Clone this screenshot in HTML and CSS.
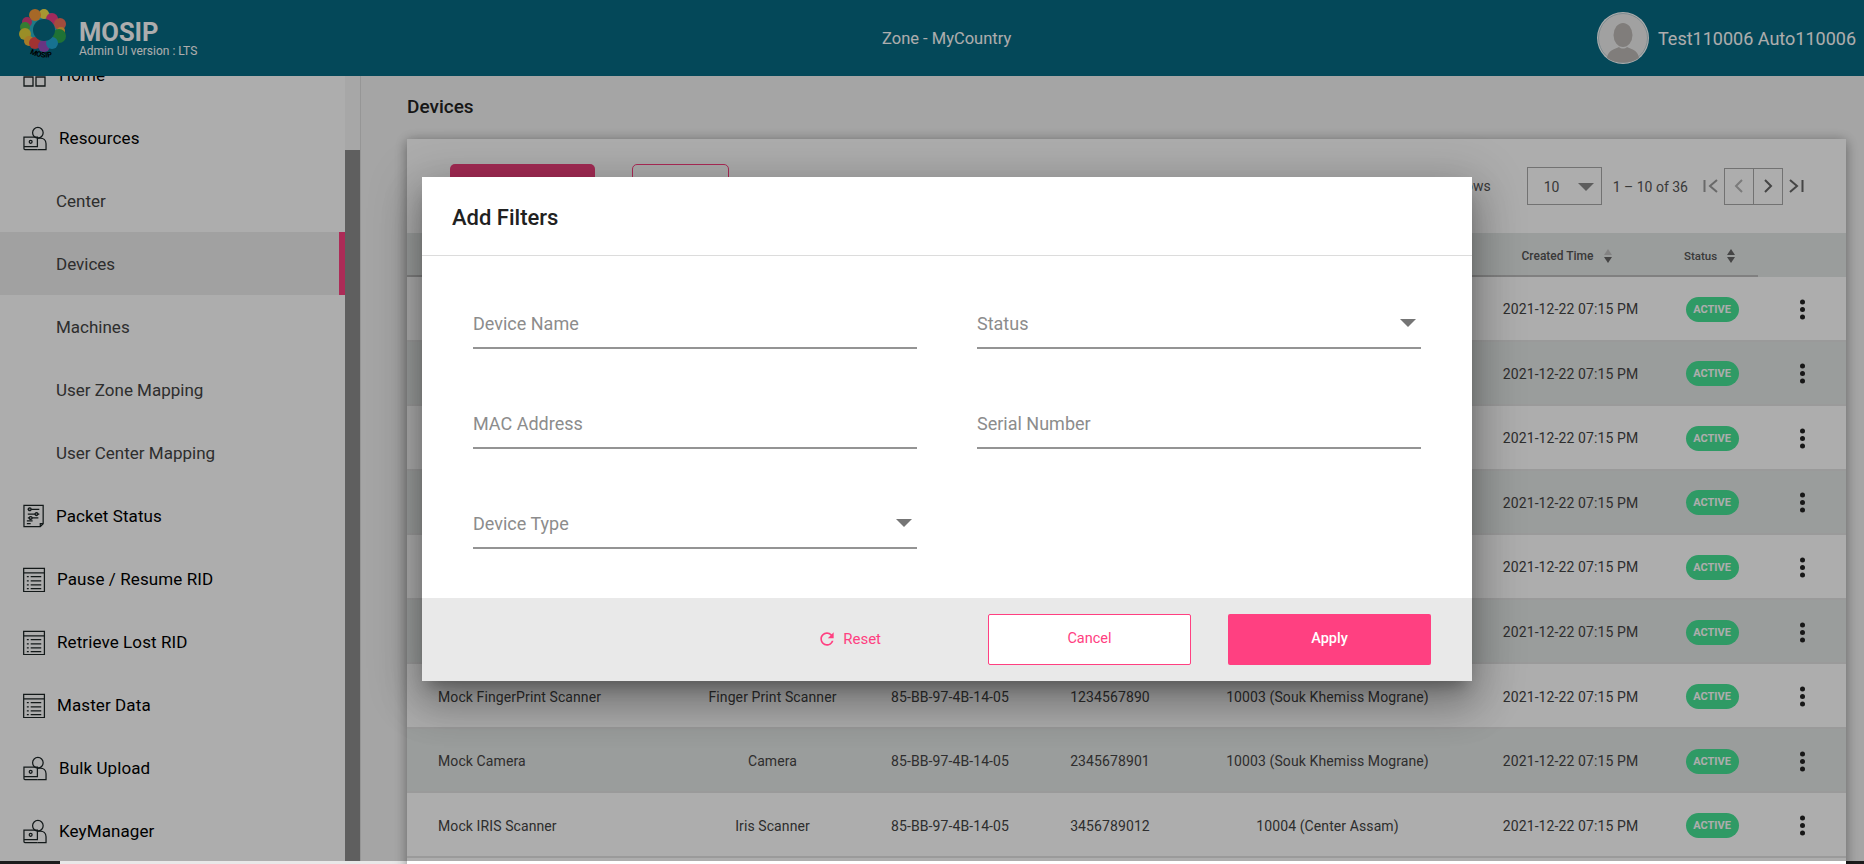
FILE: index.html
```html
<!DOCTYPE html>
<html lang="en">
<head>
    <meta charset="UTF-8">
    <title>MOSIP Admin - Devices</title>
    <link rel="stylesheet" href="styles.css">
</head>
<body>
    <div class="screen">
        <header class="topbar">
            <div class="brand">
                <svg class="logo" viewBox="0 0 52 60" width="52" height="60">
                    <circle cx="26" cy="21" r="18" fill="#2fb4c8"/>
                    <circle cx="26" cy="5" r="5" fill="#f7e04a"/>
                    <circle cx="17" cy="6" r="6" fill="#f59a3a"/>
                    <circle cx="34" cy="10" r="6" fill="#ee3f88"/>
                    <circle cx="42" cy="15" r="6" fill="#f0705a"/>
                    <circle cx="9" cy="13" r="5" fill="#d8407f"/>
                    <circle cx="7" cy="18" r="5" fill="#4fb84a"/>
                    <circle cx="43" cy="22" r="4" fill="#f5b53a"/>
                    <circle cx="41" cy="27" r="7" fill="#2fa84f"/>
                    <circle cx="7" cy="25" r="6" fill="#e3d23a"/>
                    <circle cx="11" cy="32" r="5" fill="#f5b53a"/>
                    <circle cx="17" cy="34" r="6" fill="#ed4a4a"/>
                    <circle cx="26" cy="37" r="6" fill="#9a4fc0"/>
                    <circle cx="34" cy="34" r="6" fill="#22a9d6"/>
                    <circle cx="26" cy="21" r="11" fill="#076a84"/>
                    <path id="logoArc" d="M9 43 Q27 54 46 43" fill="none"/>
                    <text class="logo-text"><textPath href="#logoArc" startOffset="3">MOSIP</textPath></text>
                </svg>
                <div class="brand-text">
                    <div class="brand-name">MOSIP</div>
                    <div class="brand-version">Admin UI version : LTS</div>
                </div>
            </div>
            <div class="zone">Zone - MyCountry</div>
            <div class="user">
                <svg class="avatar" viewBox="0 0 52 52" width="52" height="52">
                    <circle cx="26" cy="26" r="26" fill="#ffffff"/>
                    <circle cx="26" cy="26" r="24.500" fill="#eeeeee" stroke="#7fa6b2" stroke-width="0.500"/>
                    <ellipse cx="26" cy="23" rx="9.500" ry="12" fill="#bdb9b6"/>
                    <path d="M10 46 C11 38 18 37 22 35 C24 37 28 37 30 35 C34 37 41 38 42 46 C34 52 18 52 10 46 Z" fill="#bdb9b6"/>
                </svg>
                <span>Test110006 Auto110006</span>
            </div>
        </header>

        <div class="body">
            <nav class="sidebar">
                <div class="menu">
                    <div class="menu-item top wide">
                        <svg class="icon" viewBox="0 0 24 25"><path d="M1 4h9v7H1zM13 4h9v7h-9zM1 14h9v9H1zM13 14h9v9h-9z"/></svg>
                        <span>Home</span>
                    </div>
                    <div class="menu-item top wide">
                        <svg class="icon" viewBox="0 0 25 25"><use href="#person"/></svg>
                        <span>Resources</span>
                    </div>
                    <div class="menu-item sub">Center</div>
                    <div class="menu-item sub active">Devices</div>
                    <div class="menu-item sub">Machines</div>
                    <div class="menu-item sub">User Zone Mapping</div>
                    <div class="menu-item sub">User Center Mapping</div>
                    <div class="menu-item top">
                        <svg class="icon" viewBox="0 0 25 25">
                            <path d="M1 1h20v19l-3 3H1zM21 20h-3v3"/>
                            <path d="M5 5h12M5 10h12M5 14h11M4 17h6M4 20h4"/>
                            <circle cx="7" cy="5" r="1.500" fill="#adadad"/>
                            <circle cx="14" cy="10" r="1.500" fill="#adadad"/>
                            <circle cx="8" cy="14" r="1.500" fill="#adadad"/>
                        </svg>
                        <span class="tight">Packet Status</span>
                    </div>
                    <div class="menu-item top">
                        <svg class="icon" viewBox="0 0 25 25"><use href="#list"/></svg>
                        <span>Pause / Resume RID</span>
                    </div>
                    <div class="menu-item top">
                        <svg class="icon" viewBox="0 0 25 25"><use href="#list"/></svg>
                        <span>Retrieve Lost RID</span>
                    </div>
                    <div class="menu-item top">
                        <svg class="icon" viewBox="0 0 25 25"><use href="#list"/></svg>
                        <span>Master Data</span>
                    </div>
                    <div class="menu-item top wide">
                        <svg class="icon" viewBox="0 0 25 25"><use href="#person"/></svg>
                        <span>Bulk Upload</span>
                    </div>
                    <div class="menu-item top wide">
                        <svg class="icon" viewBox="0 0 25 25"><use href="#person"/></svg>
                        <span>KeyManager</span>
                    </div>
                </div>
                <div class="side-scroll"><div class="side-thumb"></div></div>
            </nav>

            <main class="content">
                <h1 class="page-title">Devices</h1>
                <section class="card">
                    <div class="toolbar">
                        <button class="btn-fill"></button>
                        <button class="btn-line"></button>
                        <div class="pager">
                            <span class="rows-label">Rows</span>
                            <div class="page-size"><span>10</span><i class="caret"></i></div>
                            <span class="page-range">1 – 10 of 36</span>
                            <svg class="page-icon" viewBox="0 0 16 14"><path d="M1.500 1v12M14 1 7 7l7 6" stroke="#9b9b9b"/></svg>
                            <div class="page-btns">
                                <div class="page-btn"><svg viewBox="0 0 10 14" width="10" height="14"><path d="M8 1 2 7l6 6" stroke="#b5b5b5"/></svg></div>
                                <div class="page-btn"><svg viewBox="0 0 10 14" width="10" height="14"><path d="M2 1l6 6-6 6" stroke="#666"/></svg></div>
                            </div>
                            <svg class="page-icon" viewBox="0 0 16 14"><path d="M2 1l7 6-7 6M14.500 1v12" stroke="#666"/></svg>
                        </div>
                    </div>

                    <div class="table">
                        <div class="row head">
                            <div></div><div></div><div></div><div></div><div></div>
                            <div class="col-head created">Created Time <i class="sort down"></i></div>
                            <div class="col-head status">Status <i class="sort"></i></div>
                            <div class="no-line"></div>
                        </div>
                        <div class="row"><div></div><div></div><div></div><div></div><div></div><div>2021-12-22 07:15 PM</div><div><span class="pill">ACTIVE</span></div><div><span class="dots"></span></div></div>
                        <div class="row"><div></div><div></div><div></div><div></div><div></div><div>2021-12-22 07:15 PM</div><div><span class="pill">ACTIVE</span></div><div><span class="dots"></span></div></div>
                        <div class="row"><div></div><div></div><div></div><div></div><div></div><div>2021-12-22 07:15 PM</div><div><span class="pill">ACTIVE</span></div><div><span class="dots"></span></div></div>
                        <div class="row"><div></div><div></div><div></div><div></div><div></div><div>2021-12-22 07:15 PM</div><div><span class="pill">ACTIVE</span></div><div><span class="dots"></span></div></div>
                        <div class="row"><div></div><div></div><div></div><div></div><div></div><div>2021-12-22 07:15 PM</div><div><span class="pill">ACTIVE</span></div><div><span class="dots"></span></div></div>
                        <div class="row"><div></div><div></div><div></div><div></div><div></div><div>2021-12-22 07:15 PM</div><div><span class="pill">ACTIVE</span></div><div><span class="dots"></span></div></div>
                        <div class="row">
                            <div class="name">Mock FingerPrint Scanner</div><div>Finger Print Scanner</div><div>85-BB-97-4B-14-05</div><div>1234567890</div><div>10003 (Souk Khemiss Mograne)</div><div>2021-12-22 07:15 PM</div><div><span class="pill">ACTIVE</span></div><div><span class="dots"></span></div>
                        </div>
                        <div class="row">
                            <div class="name">Mock Camera</div><div>Camera</div><div>85-BB-97-4B-14-05</div><div>2345678901</div><div>10003 (Souk Khemiss Mograne)</div><div>2021-12-22 07:15 PM</div><div><span class="pill">ACTIVE</span></div><div><span class="dots"></span></div>
                        </div>
                        <div class="row">
                            <div class="name">Mock IRIS Scanner</div><div>Iris Scanner</div><div>85-BB-97-4B-14-05</div><div>3456789012</div><div>10004 (Center Assam)</div><div>2021-12-22 07:15 PM</div><div><span class="pill">ACTIVE</span></div><div><span class="dots"></span></div>
                        </div>
                    </div>
                </section>
            </main>
        </div>

        <div class="overlay">
            <div class="dialog">
                <div class="dialog-title">Add Filters</div>
                <div class="dialog-body">
                    <div class="field">Device Name</div>
                    <div class="field">Status <i class="field-caret"></i></div>
                    <div class="field">MAC Address</div>
                    <div class="field">Serial Number</div>
                    <div class="field">Device Type <i class="field-caret"></i></div>
                </div>
                <div class="dialog-foot">
                    <button class="reset">
                        <svg viewBox="0 0 24 24" width="20" height="20"><path d="M17.650 6.350A7.958 7.958 0 0 0 12 4c-4.420 0-7.990 3.580-7.990 8s3.570 8 7.990 8c3.730 0 6.840-2.550 7.730-6h-2.080A5.990 5.990 0 0 1 12 18c-3.310 0-6-2.690-6-6s2.690-6 6-6c1.660 0 3.140.690 4.220 1.780L13 11h7V4l-2.350 2.350z" fill="#ff4081"/></svg>
                        Reset
                    </button>
                    <button class="cancel">Cancel</button>
                    <button class="apply">Apply</button>
                </div>
            </div>
        </div>
    </div>

    <div class="taskstrip">
        <div class="strip-dark s1"></div>
        <div class="strip-light"></div>
        <div class="strip-dark s2"></div>
        <div class="strip-grey"></div>
        <div class="strip-dark s3"></div>
    </div>

    <svg class="defs" width="0" height="0">
        <defs>
            <g id="person">
                <circle cx="15.500" cy="6.500" r="5.500"/>
                <path d="M15 12h3c3 0 6 2 6 6v6H15"/>
                <path d="M1 11h14v10H1zM1 21v2c0 .6.400 1 1 1h13"/>
                <circle cx="8" cy="16" r="1.500"/>
            </g>
            <g id="list">
                <path d="M.7 1h21.600v24H.7zM.7 5.500h21.600"/>
                <path d="M4 9.500h2M8 9.500h11M4 14h2M8 14h11M4 18h2M8 18h11M4 22h2M8 22h11"/>
            </g>
        </defs>
    </svg>
</body>
</html>
```

FILE: styles.css
```css
* {
    box-sizing: border-box;
}
body {
    margin: 0;
    width: 1864px;
    height: 864px;
    overflow: hidden;
    font-family: Roboto, "Noto Sans", sans-serif;
    background-color: #f4f4f4;
}
button {
    font-family: inherit;
    cursor: pointer;
}
.screen {
    position: relative;
    height: 861px;
    display: flex;
    flex-direction: column;
}

/* top bar */
.topbar {
    height: 76px;
    flex: none;
    display: grid;
    grid-template-columns: 864px auto 1fr;
    align-items: center;
    padding: 0 8px 0 18px;
    background-color: #076a84;
    color: white;
}
.brand {
    display: flex;
    align-items: center;
}
.logo {
    margin: 2px 9px 0 0;
}
.logo-text {
    font-size: 7.500px;
    font-weight: 700;
    fill: #000;
}
.brand-name {
    font-size: 25.500px;
    font-weight: 700;
    line-height: 26px;
}
.brand-version {
    font-size: 12px;
    line-height: 13px;
}
.zone {
    font-size: 16.500px;
}
.user {
    display: flex;
    align-items: center;
    justify-content: flex-end;
    gap: 9px;
    font-size: 18px;
}

/* sidebar */
.body {
    flex: 1;
    display: flex;
    min-height: 0;
}
.sidebar {
    width: 361px;
    flex: none;
    display: flex;
    overflow: hidden;
    background-color: white;
    border-right: 1px solid #dedede;
}
.menu {
    flex: 1;
    margin-top: -33px;
}
.menu-item {
    height: 63px;
    padding-top: 1px;
    display: flex;
    align-items: center;
    color: #000;
    font-size: 17px;
}
.menu-item.top {
    padding-left: 23px;
    letter-spacing: 0.1px;
}
.menu-item.sub {
    padding-left: 56px;
    color: #444;
}
.menu-item.active {
    background-color: #eeeeee;
    border-right: 6px solid #ff4081;
}
.menu-item span {
    margin-left: 10px;
}
.menu-item .tight {
    margin-left: 9px;
}
.menu-item.wide span {
    margin-left: 12px;
}
.icon {
    width: 24px;
    height: 25px;
    fill: none;
    stroke: #1c2526;
    stroke-width: 1.300;
    flex: none;
}
.side-scroll {
    width: 15px;
    flex: none;
    padding-top: 74px;
    background-color: #f7f7f7;
}
.side-thumb {
    height: 100%;
    background-color: #8c8c8c;
}

/* main area */
.content {
    flex: 1;
    padding: 0 18px 0 46px;
    min-width: 0;
}
.page-title {
    margin: 19px 0 20px;
    font-size: 19px;
    line-height: 24px;
    font-weight: 500;
    color: #222;
}
.card {
    background-color: white;
    height: 760px;
    box-shadow: 0 2px 12px rgba(0, 0, 0, 0.4);
}
.toolbar {
    height: 94px;
    display: flex;
    align-items: flex-start;
    padding: 25px 0 0 43px;
}
.btn-fill {
    width: 145px;
    height: 60px;
    border: none;
    border-radius: 5px;
    background-color: #f0407d;
}
.btn-line {
    width: 97px;
    height: 60px;
    margin-left: 37px;
    border: 1px solid #ff4081;
    border-radius: 5px;
    background-color: white;
}
.pager {
    margin-left: auto;
    margin-right: 42px;
    display: flex;
    align-items: center;
    margin-top: 3px;
    font-size: 14px;
    color: #555;
}
.rows-label {
    margin-right: 36px;
    font-size: 14px;
}
.page-size {
    width: 75px;
    height: 38px;
    border: 1px solid #a9a9a9;
    display: flex;
    align-items: center;
    justify-content: space-between;
    padding: 1px 7px 0 16px;
    margin-right: 11px;
}
.caret {
    width: 0;
    height: 0;
    border-left: 8px solid transparent;
    border-right: 8px solid transparent;
    border-top: 8px solid #8a8a8a;
}
.page-range {
    margin-right: 15px;
    padding-top: 1px;
}
.page-icon {
    width: 16px;
    height: 14px;
    fill: none;
    stroke-width: 2;
}
.page-icon path {
    fill: none;
    stroke-width: 2;
}
.page-btns {
    display: flex;
    margin: 0 5px;
}
.page-btn {
    width: 30px;
    height: 37px;
    border: 1px solid #a9a9a9;
    display: flex;
    align-items: center;
    justify-content: center;
}
.page-btn + .page-btn {
    margin-left: -1px;
}
.page-btn path {
    fill: none;
    stroke-width: 2;
}

/* table */
.row {
    display: grid;
    grid-template-columns: 274px 183px 172px 148px 287px 199px 84px 92px;
    align-items: center;
    height: 64.560px;
    padding-top: 2px;
    border-bottom: 2px solid #e4e4e4;
    font-size: 14px;
    letter-spacing: 0.1px;
    color: #444;
    text-align: center;
}
.row:nth-child(odd) {
    background-color: #e4e7e6;
}
.row > div:last-child {
    padding-left: 4px;
}
.row.head {
    height: 44px;
    padding-top: 0;
    font-size: 12px;
    font-weight: 500;
    letter-spacing: 0;
    color: #555;
    border-bottom: none;
    background-color: #e4e7e6;
}
.row.head > div {
    height: 44px;
    padding-top: 4px;
    display: flex;
    align-items: center;
    justify-content: center;
    gap: 10px;
    border-bottom: 2px solid #bdbdbd;
}
.row.head > .created {
    padding-right: 7px;
}
.row.head > .status {
    margin-right: -4px;
    padding-right: 8px;
    font-size: 11.500px;
}
.row.head > .no-line {
    border-bottom: none;
}
.row .name {
    text-align: left;
    padding-left: 31px;
}
.pill {
    display: inline-block;
    width: 53px;
    height: 25px;
    line-height: 25px;
    border-radius: 13px;
    background-color: #46e496;
    color: white;
    font-size: 11px;
    font-weight: 700;
    letter-spacing: 0;
    text-align: center;
    vertical-align: middle;
}
.dots {
    display: block;
    width: 5px;
    height: 5px;
    margin: 0 auto;
    border-radius: 50%;
    background-color: #222;
    box-shadow: 0 -7.500px 0 #222, 0 7.500px 0 #222;
}
.sort {
    position: relative;
    display: inline-block;
    width: 9px;
    height: 14px;
}
.sort::before, .sort::after {
    content: "";
    position: absolute;
    left: 0;
    border-left: 4.500px solid transparent;
    border-right: 4.500px solid transparent;
}
.sort::before {
    top: 0;
    border-bottom: 6px solid #666;
}
.sort::after {
    bottom: 0;
    border-top: 6px solid #666;
}
.sort.down::before {
    border-bottom-color: #c2c2c2;
}

/* dialog */
.overlay {
    position: absolute;
    inset: 0;
    padding: 177px 0 0 422px;
    background-color: rgba(0, 0, 0, 0.32);
}
.dialog {
    width: 1050px;
    height: 504px;
    display: flex;
    flex-direction: column;
    background-color: white;
    box-shadow: 0 11px 15px -7px rgba(0, 0, 0, 0.3), 0 24px 38px 3px rgba(0, 0, 0, 0.2), 0 9px 46px 8px rgba(0, 0, 0, 0.18);
}
.dialog-title {
    height: 79px;
    flex: none;
    display: flex;
    align-items: center;
    padding: 2px 0 0 30px;
    font-size: 22px;
    font-weight: 500;
    color: #212121;
    border-bottom: 1px solid #dcdcdc;
}
.dialog-body {
    flex: 1;
    display: grid;
    grid-template-columns: 444px 444px;
    grid-auto-rows: 58px;
    column-gap: 60px;
    row-gap: 42px;
    padding: 35px 0 0 51px;
}
.field {
    position: relative;
    display: flex;
    align-items: center;
    padding-top: 9px;
    font-size: 18px;
    color: #8c8c8c;
    border-bottom: 2px solid #949494;
}
.field-caret {
    position: absolute;
    right: 5px;
    top: 28px;
    border-left: 8.500px solid transparent;
    border-right: 8.500px solid transparent;
    border-top: 8px solid #757575;
}
.dialog-foot {
    height: 83px;
    flex: none;
    display: flex;
    align-items: center;
    justify-content: flex-end;
    padding: 0 41px 0 0;
    background-color: #e9e9e9;
}
.reset {
    display: flex;
    align-items: center;
    gap: 6px;
    margin-right: 107px;
    padding: 0 0 2px;
    border: none;
    background: none;
    color: #ff4081;
    font-size: 15px;
}
.cancel, .apply {
    width: 203px;
    height: 51px;
    padding-bottom: 3px;
    border-radius: 2px;
    font-size: 14.500px;
}
.cancel {
    border: 1px solid #ff4081;
    background-color: white;
    color: #ff4081;
}
.apply {
    margin-left: 37px;
    border: none;
    background-color: #ff4081;
    color: white;
    font-weight: 500;
}

/* strip along the bottom edge */
.taskstrip {
    height: 3px;
    display: flex;
}
.strip-dark {
    background-color: #1c1c1c;
}
.s1 {
    width: 60px;
}
.strip-light {
    width: 513px;
    background-color: #e8e8e8;
}
.s2 {
    width: 272px;
}
.strip-grey {
    width: 63px;
    background-color: #4a4a4a;
}
.s3 {
    flex: 1;
}
.defs {
    position: absolute;
}
```
